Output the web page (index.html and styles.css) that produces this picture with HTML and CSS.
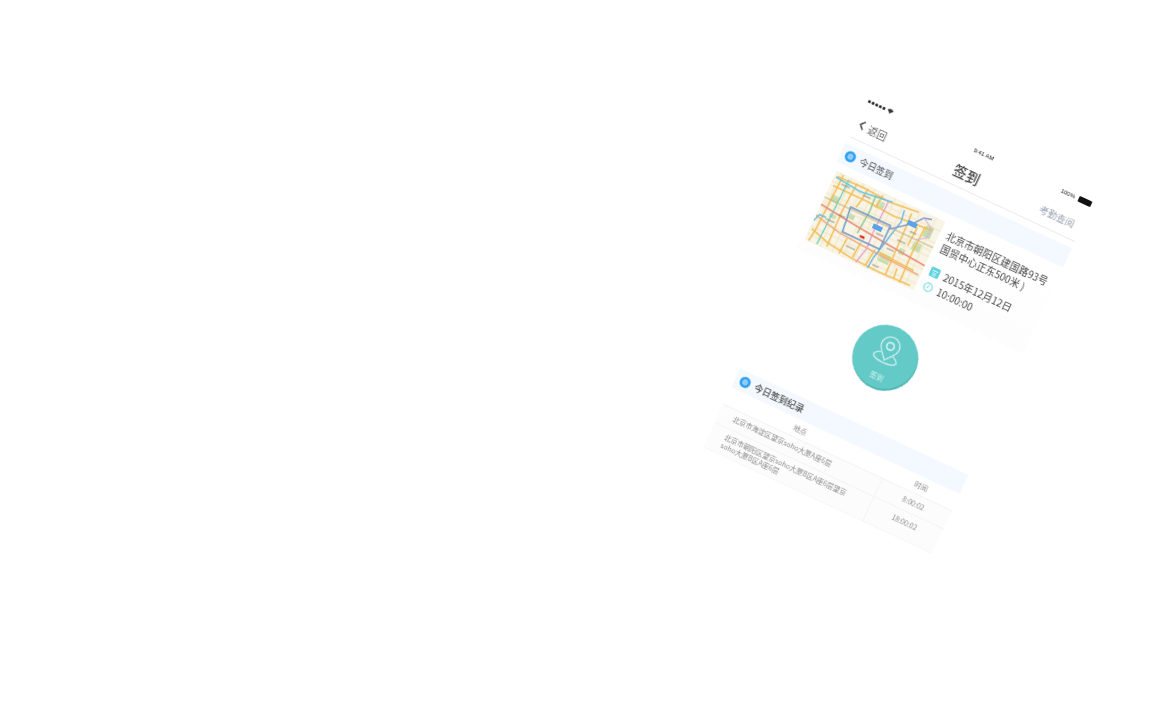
FILE: index.html
```html
<!DOCTYPE html>
<html lang="zh-CN">
<head>
<meta charset="utf-8">
<title>签到</title>
<link rel="stylesheet" href="styles.css">
</head>
<body>
<main class="phone">
  <div class="status">
    <div class="status-left">
      <span class="dots"><i></i><i></i><i></i><i></i><i></i></span>
      <svg class="wifi" viewBox="0 0 10 8"><path d="M0 2.5a7 7 0 0 1 10 0L5 8z" fill="#333"/></svg>
    </div>
    <span class="clock">9:41 AM</span>
    <div class="status-right"><span>100%</span><span class="battery"></span></div>
  </div>
  <header class="nav">
    <div class="back">
      <svg class="chev" viewBox="0 0 6 10"><path d="M5 .8 1 5l4 4.2" fill="none" stroke="#333" stroke-width="1.3"/></svg>
      <span>返回</span>
    </div>
    <h1 class="title">签到</h1>
    <a class="query">考勤查阅</a>
  </header>

  <section class="bar">
    <svg class="bar-icon" viewBox="0 0 12 12"><circle cx="6" cy="6" r="6" fill="#2b9ff3"/><rect x="3.400" y="3.200" width="5.200" height="5.600" rx="2" fill="#8ccbf8" stroke="#bfe2fb" stroke-width=".7"/></svg>
    <span>今日签到</span>
  </section>

  <section class="card">
    <svg class="map" viewBox="0 -3 120 76" preserveAspectRatio="none">
      <rect y="-3" width="120" height="76" fill="#f8f4e6"/>
      <g fill="#c4ddb0"><rect x="6" y="20" width="9" height="7"/><rect x="74" y="52" width="12" height="9"/><rect x="50" y="6" width="8" height="6"/><rect x="100" y="28" width="9" height="9"/><rect x="12" y="38" width="7" height="4"/><rect x="105" y="8" width="8" height="12"/><rect x="30" y="30" width="6" height="5"/><rect x="90" y="40" width="6" height="6"/></g>
      <g fill="none" stroke="#ece4c0" stroke-width=".8"><path d="M0 8H120M0 21H120M0 30H120M0 36H120M0 50H120M0 58H120M0 66H120M5 -3V73M17 -3V73M30 -3V73M42 -3V73M53 -3V73M65 -3V73M75 -3V73M93 -3V73M110 -3V73"/></g>
      <g fill="none" stroke="#f3bd55" stroke-width="1.500">
        <path d="M3 2 30 1 62 3 92 0"/>
        <path d="M3 12H40L70 14 112 11"/>
        <path d="M2 60 22 66 50 70 82 71 115 70"/>
        <path d="M8 -2 7 30 6 58 4 72"/>
        <path d="M24 0 22 30 23 70"/>
        <path d="M36 0 35 12 33 22M38 54 37 71"/>
        <path d="M52 0 51 14M52 52 51 69"/>
        <path d="M68 52 66 71"/>
        <path d="M86 4 87 30 88 71"/>
        <path d="M97 14 96 35M96 60 97 71"/>
        <path d="M104 10 103 40 104 72"/>
        <path d="M72 53 112 55"/>
      </g>
      <g fill="none" stroke-width="1.300">
        <path d="M2 3 30 6 64 2" stroke="#62c3e4"/>
        <path d="M15 0 14 40 13 72" stroke="#6fcbb8"/>
        <path d="M46 3 47 20 45 45" stroke="#83c47f"/>
        <path d="M60 3 59 35 60 55 56 72" stroke="#e59ccf"/>
        <path d="M0 34 34 38 74 42 120 46" stroke="#ea8570"/>
        <path d="M0 46 28 52 70 55 118 57" stroke="#eeaa7c"/>
        <path d="M78 4 80 16 70 60 69 72" stroke="#5fb0e2"/>
        <path d="M0 52 3 44H10" stroke="#5cc1e8"/>
        <path d="M0 26H120" stroke="#c2b27e" stroke-width="1"/>
        <path d="M28 24H72V50H31Z" stroke="#6c94c8" stroke-width="1.400"/>
        <path d="M72 28 92 12 99 3 107 1" stroke="#7b94c6"/>
        <path d="M99 3 110 9 110 20 101 26" stroke="#d0a8d6" stroke-width="1"/>
      </g>
      <g stroke="#8a8a7a" stroke-width=".9" fill="none"><path d="M10 7h9M34 8h8M10 45h10M20 36h7M62 37h8M84 34h9M78 46h8M40 61h10M92 21h7M72 67h7"/></g>
      <rect x="56" y="29" width="10" height="5" fill="#5aa3e8"/>
      <rect x="86" y="11" width="10" height="5" fill="#5aa3e8"/>
      <path d="M48 45.500 53 45 54 47.500 49 47.500Z" fill="#e02020"/>
    </svg>
    <div class="info">
      <p class="addr">北京市朝阳区建国路93号国贸中心正东500米 )</p>
      <p class="meta date">
        <svg class="meta-icon" viewBox="0 0 10 10"><rect width="10" height="10" rx="1.500" fill="#63d3de"/><path d="M2 3.500H8M3 6H7M3 8H7" stroke="#fff" stroke-width=".8"/></svg>
        <span>2015年12月12日</span>
      </p>
      <p class="meta">
        <svg class="meta-icon" viewBox="0 0 10 10"><circle cx="5" cy="5" r="4.200" fill="none" stroke="#63d3de" stroke-width="1.100"/><path d="M5 2.600V5.200L3.400 6" fill="none" stroke="#63d3de" stroke-width=".8"/></svg>
        <span>10:00:00</span>
      </p>
    </div>
  </section>

  <button class="sign" type="button">
    <svg class="pin" viewBox="0 0 32 32">
      <g fill="none" stroke="#dff5f3" stroke-width="1.100">
        <path d="M16 2a9.500 9.500 0 0 1 9.500 9.500c0 6-6 10-9.500 15-3.500-5-9.500-9-9.500-15A9.500 9.500 0 0 1 16 2z"/>
        <circle cx="16" cy="11.500" r="3.800" stroke-width="1.500"/>
        <path d="M9.500 20C4 22 2.500 25 5 27c4 3 18 3 22 0 2.500-2 1-5-4.500-7"/>
      </g>
    </svg>
    <span>签到</span>
  </button>

  <section class="bar bar-second">
    <svg class="bar-icon" viewBox="0 0 12 12"><circle cx="6" cy="6" r="6" fill="#2b9ff3"/><rect x="3.400" y="3.200" width="5.200" height="5.600" rx="2" fill="#8ccbf8" stroke="#bfe2fb" stroke-width=".7"/></svg>
    <span>今日签到纪录</span>
  </section>

  <section class="table">
    <div class="head col-place">地点</div>
    <div class="head col-time">时间</div>
    <div class="cell place first">北京市海淀区望京soho大厦A座6层</div>
    <div class="cell time">8:00:02</div>
    <div class="cell place tall">北京市朝阳区望京soho大厦B区A座6层望京soho大厦B区A座6层</div>
    <div class="cell time tall last">18:00:02</div>
  </section>
</main>
</body>
</html>
```
FILE: styles.css
```css
* { box-sizing: border-box; margin: 0; padding: 0; }
html, body { width: 100%; height: 100%; overflow: hidden; background: #fff; }
body { font-family: "Noto Sans CJK SC", "Liberation Sans", sans-serif; color: #444; }

.phone {
  position: absolute;
  left: 868.5px;
  top: 91.6px;
  width: 252px;
  transform: rotate(25deg);
  transform-origin: 0 0;
  filter: blur(0.5px);
}

.status { height: 16px; display: grid; grid-template-columns: 1fr auto 1fr; align-items: center; padding-left: 3px; font-size: 6px; color: #222; }
.status-left { display: flex; align-items: center; gap: 2px; }
.dots { display: flex; gap: 1px; }
.dots i { width: 3px; height: 3px; border-radius: 50%; background: #222; }
.wifi { width: 7px; height: 5px; }
.clock { font-family: "Liberation Sans", sans-serif; transform: translateX(3px); }
.status-right { display: flex; justify-content: flex-end; align-items: center; gap: 4px; font-family: "Liberation Sans", sans-serif; padding-right: 3px; }
.battery { width: 14px; height: 6px; background: #111; border-radius: 1px; }

.nav { height: 33px; margin-left: 2px; width: 248px; border-bottom: 1px solid #ececec; display: grid; grid-template-columns: 1fr auto 1fr; align-items: center; padding: 2px 8px 0 3px; }
.back { display: flex; align-items: center; gap: 4px; font-size: 10px; color: #666; }
.chev { width: 6px; height: 10px; }
.title { font-size: 14px; font-weight: 500; color: #444; }
.query { justify-self: end; font-size: 9.5px; color: #9aa4b2; }

.bar { margin-top: 7px; width: 250px; height: 21px; background: #f3f9fe; display: flex; align-items: center; gap: 5px; padding-left: 5px; font-size: 9px; color: #444; }
.bar-icon { width: 11px; height: 11px; flex: none; }
.bar-second { margin-top: 38.5px; width: 252px; font-weight: 500; }

.card { width: 250px; height: 95px; padding: 8px 0 0 4px; display: flex; gap: 7px; background: linear-gradient(#fff, #fdfdfd); }
.map { width: 120px; height: 76px; flex: none; }
.info { flex: 1; min-width: 0; font-size: 10px; line-height: 14px; color: #444; }
.addr { padding-top: 5px; }
.meta { display: flex; align-items: center; gap: 5px; height: 16px; }
.date { margin-top: 10px; }
.meta-icon { width: 10px; height: 10px; flex: none; }

.sign { margin: 28.5px 0 0 94px; width: 66px; height: 66px; border: 0; border-radius: 50%; background: #63cac7; box-shadow: inset -1px -1.5px 0 #50b5b2; display: flex; flex-direction: column; align-items: center; padding-top: 9px; font: inherit; font-size: 7px; line-height: 10px; color: #d8f3f1; }
.pin { width: 32px; height: 32px; flex: none; }
.sign span { margin-top: 7px; }

.table { display: grid; grid-template-columns: 176px 76px; grid-template-rows: 18px 20px 28px; font-size: 7px; line-height: 9px; color: #8a8a8a; }
.head { display: flex; align-items: center; justify-content: center; padding-top: 1px; }
.col-place { padding-right: 15px; }
.cell { background: #fcfcfc; border-top: 1px solid #f4f4f4; display: flex; align-items: center; }
.place { padding: 0 15px; border-right: 1px solid #f4f4f4; }
.first { padding-bottom: 3px; }
.time { justify-content: center; }
.last { padding-bottom: 6px; }
.tall { border-bottom: 1px solid #f7f7f7; }
```
